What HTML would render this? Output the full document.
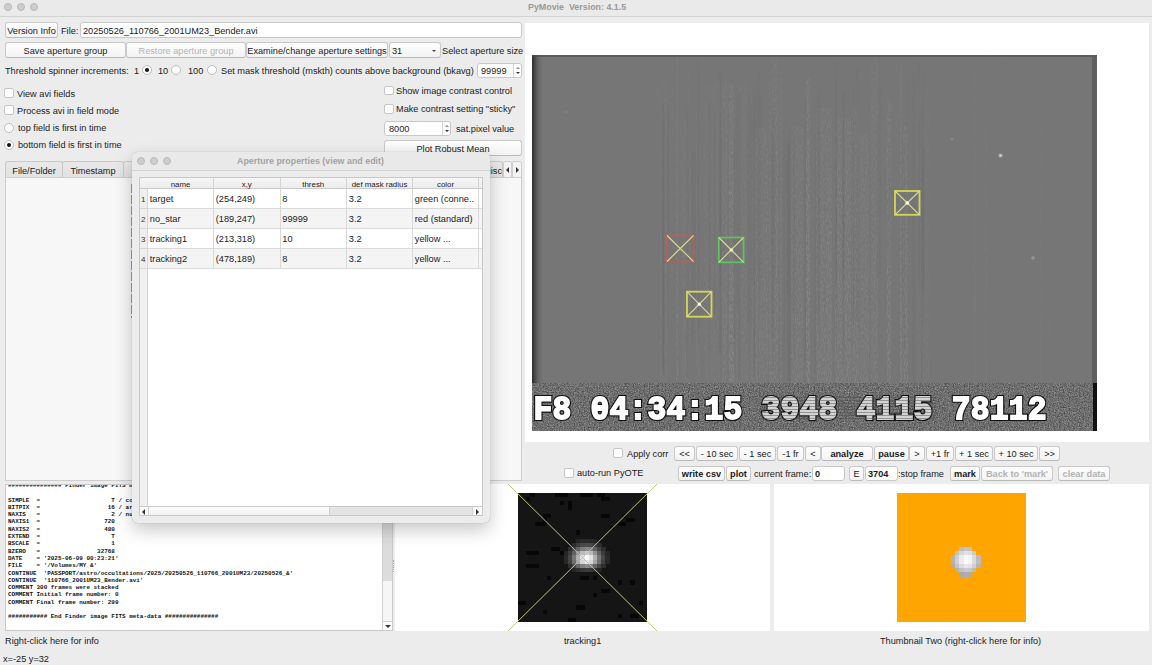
<!DOCTYPE html>
<html><head><meta charset="utf-8">
<style>
*{box-sizing:border-box;margin:0;padding:0}
html,body{width:1152px;height:665px;overflow:hidden;background:#ececec;font-family:"Liberation Sans",sans-serif;font-size:9.2px;color:#1a1a1a}
.a{position:absolute}
.t{position:absolute;white-space:nowrap;line-height:10px;margin-top:0.5px}
.btn{position:absolute;background:linear-gradient(#fefefe,#f3f3f3);border:1px solid #c9c9c9;border-bottom-color:#b9b9b9;border-radius:3px;text-align:center;white-space:nowrap;line-height:13px;color:#1a1a1a;padding-top:1.5px}
.dis{color:#b3b3b3}
.b{font-weight:bold}
.fld{position:absolute;background:#fff;border:1px solid #c8c8c8;border-radius:3px;white-space:nowrap;line-height:13px;padding-left:2px}
.cb{position:absolute;width:9px;height:9px;background:#fff;border:1px solid #c6c6c6;border-radius:2px}
.rd{position:absolute;width:10px;height:10px;background:#fff;border:1px solid #bcbcbc;border-radius:50%}
.rd.on::after{content:"";position:absolute;left:2px;top:2px;width:4px;height:4px;border-radius:50%;background:#111}
.tl{position:absolute;width:8px;height:8px;border-radius:50%;background:#cdcdcd;border:1px solid #b9b9b9}
.tab{background:linear-gradient(#e9e9e9,#e1e1e1);border:1px solid #c9c9c9;border-bottom:none;border-radius:3px 3px 0 0;text-align:center;line-height:14px;padding-top:2px;white-space:nowrap;overflow:hidden}
.tabarr{background:#f3f3f3;border:1px solid #cfcfcf;border-radius:2px}
.tri{position:absolute;width:0;height:0}
.tri.l{left:2px;top:5px;border-top:3px solid transparent;border-bottom:3px solid transparent;border-right:3px solid #333}
.tri.r{left:3px;top:5px;border-top:3px solid transparent;border-bottom:3px solid transparent;border-left:3px solid #333}
.tri.u{border-left:2.5px solid transparent;border-right:2.5px solid transparent;border-bottom:2.5px solid #888}
.tri.dd{border-left:2.5px solid transparent;border-right:2.5px solid transparent;border-top:2.5px solid #333}
.tri.d{border-left:3px solid transparent;border-right:3px solid transparent;border-top:3px solid #333}
.fits{font-family:"Liberation Mono",monospace;font-weight:bold;font-size:5.95px;line-height:7.29px;color:#111}
.ts{font-family:"Liberation Mono",monospace;font-weight:bold;font-size:31.3px;line-height:32px;color:#fff;white-space:pre;transform-origin:0 0;transform:scaleY(1.05);-webkit-text-stroke:1.7px #fff;letter-spacing:0.23px}
.tsb{color:#000;-webkit-text-stroke:4px #111}
.ts .dim{-webkit-text-stroke-color:#d2d2d2}
.ts .dim{color:#d4d4d4}
</style></head><body>

<!-- title bar -->
<div class="a" style="left:0;top:0;width:1152px;height:17px;background:#eaeaea;border-bottom:1px solid #d2d2d2"></div>
<div class="tl" style="left:4px;top:3px"></div>
<div class="tl" style="left:17px;top:3px"></div>
<div class="tl" style="left:30px;top:3px"></div>
<div class="t b" style="left:528px;top:1px;color:#999;font-size:8.9px">PyMovie&nbsp; Version: 4.1.5</div>

<!-- LEFT PANEL -->
<div class="btn" style="left:5px;top:22px;width:53px;height:16px">Version Info</div>
<div class="t" style="left:61px;top:25px">File:</div>
<div class="fld" style="left:80px;top:22px;width:442px;height:16px;padding-top:1.5px">20250526_110766_2001UM23_Bender.avi</div>

<div class="btn" style="left:5px;top:42px;width:121px;height:16px">Save aperture group</div>
<div class="btn dis" style="left:126px;top:42px;width:120px;height:16px">Restore aperture group</div>
<div class="btn" style="left:246px;top:42px;width:142px;height:16px">Examine/change aperture settings</div>
<div class="btn" style="left:389px;top:42px;width:52px;height:16px;text-align:left;padding-left:2px">31<span class="a" style="right:4.5px;top:7px;width:0;height:0;border-left:2.5px solid transparent;border-right:2.5px solid transparent;border-top:2.5px solid #444"></span></div>
<div class="t" style="left:442px;top:45px">Select aperture size</div>

<div class="t" style="left:5px;top:65px">Threshold spinner increments:</div>
<div class="t" style="left:134px;top:65px">1</div>
<div class="rd on" style="left:142px;top:65px"></div>
<div class="t" style="left:158px;top:65px">10</div>
<div class="rd" style="left:171px;top:65px"></div>
<div class="t" style="left:188px;top:65px">100</div>
<div class="rd" style="left:207px;top:65px"></div>
<div class="t" style="left:221px;top:65px">Set mask threshold (mskth) counts above background (bkavg)</div>
<div class="fld" style="left:477px;top:63px;width:45px;height:15px;padding-left:3px;padding-top:1px">99999<div class="a" style="left:35px;top:0;width:9px;height:13px;border-left:1px solid #d4d4d4"><span class="tri u" style="left:2px;top:2.5px"></span><span class="tri dd" style="left:2px;top:7.5px"></span></div></div>

<div class="cb" style="left:4px;top:88px;width:10px;height:10px"></div>
<div class="t" style="left:17px;top:88px">View avi fields</div>
<div class="cb" style="left:4px;top:105px;width:10px;height:10px"></div>
<div class="t" style="left:17px;top:105px">Process avi in field mode</div>
<div class="rd" style="left:4px;top:122.5px"></div>
<div class="t" style="left:18px;top:122px">top field is first in time</div>
<div class="rd on" style="left:4px;top:139.5px"></div>
<div class="t" style="left:18px;top:139px">bottom field is first in time</div>

<div class="cb" style="left:384px;top:85.5px;width:9.5px;height:9.5px"></div>
<div class="t" style="left:396px;top:85px">Show image contrast control</div>
<div class="cb" style="left:384px;top:104px;width:9.5px;height:9.5px"></div>
<div class="t" style="left:396px;top:103px">Make contrast setting "sticky"</div>
<div class="fld" style="left:384px;top:121px;width:67px;height:15px;padding-left:4px;padding-top:1px">8000<div class="a" style="left:57px;top:0;width:9px;height:13px;border-left:1px solid #d4d4d4"><span class="tri u" style="left:2px;top:2.5px"></span><span class="tri dd" style="left:2px;top:7.5px"></span></div></div>
<div class="t" style="left:456px;top:123px">sat.pixel value</div>
<div class="btn" style="left:384px;top:140px;width:138px;height:16px">Plot Robust Mean</div>

<!-- tabs -->
<div class="a" style="left:5px;top:177px;width:517px;height:304px;background:#f7f7f7;border:1px solid #cdcdcd"></div>
<div class="a tab" style="left:5px;top:161px;width:58px;height:16px">File/Folder</div>
<div class="a tab" style="left:62px;top:161px;width:62px;height:16px">Timestamp</div>
<div class="a tab" style="left:123px;top:161px;width:380px;height:16px;text-align:right;padding-right:0px">Misc</div>
<div class="a tabarr" style="left:503px;top:161px;width:9px;height:17px"><span class="tri l"></span></div>
<div class="a tabarr" style="left:512px;top:161px;width:10px;height:17px"><span class="tri r"></span></div>

<div class="a" style="left:130.5px;top:184px;width:1px;height:134px;background:repeating-linear-gradient(#9c9c9c 0 9px,transparent 9px 11px)"></div>
<!-- FITS text area -->
<div class="a" style="left:5px;top:484px;width:388px;height:147px;background:#fff;border:1px solid #c9c9c9;overflow:hidden">
<pre class="fits" style="position:absolute;left:2px;top:-3px">############### Finder image FITS meta-data ###############

SIMPLE  =                    T / conforms to FITS standard
BITPIX  =                   16 / array data type
NAXIS   =                    2 / number of array dimensions
NAXIS1  =                  720
NAXIS2  =                  480
EXTEND  =                    T
BSCALE  =                    1
BZERO   =                32768
DATE    = '2025-06-09 00:23:21'
FILE    = '/Volumes/MY &'
CONTINUE  'PASSPORT/astro/occultations/2025/20250526_110766_2001UM23/20250526_&'
CONTINUE  '110766_2001UM23_Bender.avi'
COMMENT 300 frames were stacked
COMMENT Initial frame number: 0
COMMENT Final frame number: 299

########### End Finder image FITS meta-data ###############</pre>
<div class="a" style="left:376px;top:-1px;width:11px;height:147px;background:#f6f6f6;border-left:1px solid #d0d0d0"></div>
<div class="a" style="left:377px;top:0;width:10px;height:96px;background:#dcdcdc"></div>
<div class="a" style="left:377px;top:136px;width:10px;height:10px;background:#fbfbfb;border-top:1px solid #d0d0d0"><span class="tri d" style="left:2px;top:3px"></span></div>
</div>
<div class="t" style="left:5px;top:635px">Right-click here for info</div>
<div class="t" style="left:3px;top:653px">x=-25 y=32</div>

<!-- RIGHT PANEL -->
<div class="a" style="left:525px;top:23px;width:624px;height:419px;background:#fff"></div>
<div class="a" id="vid" style="left:532px;top:55px;width:565px;height:376px;background:#727272;overflow:hidden"><svg class="a" style="left:0;top:0" width="565" height="377">
<defs>
<filter id="nz" x="0" y="0" width="100%" height="100%" color-interpolation-filters="sRGB"><feTurbulence type="fractalNoise" baseFrequency="0.8" numOctaves="2" seed="3"/><feColorMatrix type="matrix" values="0.5 0 0 0 0.18  0.5 0 0 0 0.18  0.5 0 0 0 0.18  0 0 0 0 1"/></filter>
<filter id="sp" x="0" y="0" width="100%" height="100%" color-interpolation-filters="sRGB"><feTurbulence type="fractalNoise" baseFrequency="0.9 0.3" numOctaves="1" seed="9"/><feColorMatrix type="matrix" values="0 0 0 0 0.56  0 0 0 0 0.56  0 0 0 0 0.56  2.4 0 0 0 -0.9"/></filter>
<linearGradient id="lg" x1="0" x2="1"><stop offset="0" stop-color="#2c2c2c"/><stop offset="0.35" stop-color="#555"/><stop offset="1" stop-color="#767676" stop-opacity="0"/></linearGradient>
<linearGradient id="vg" x1="0" y1="0" x2="0" y2="1"><stop offset="0" stop-color="#fff" stop-opacity="0.45"/><stop offset="0.5" stop-color="#fff" stop-opacity="0.85"/><stop offset="1" stop-color="#fff" stop-opacity="1"/></linearGradient>
<mask id="m1"><g><rect x="128" y="25" width="7" height="304" fill="#fff" opacity="0.35"/><rect x="144" y="2" width="2" height="327" fill="#fff" opacity="0.51"/><rect x="150" y="64" width="4" height="265" fill="#fff" opacity="0.35"/><rect x="155" y="12" width="3" height="317" fill="#fff" opacity="0.31"/><rect x="164" y="42" width="4" height="287" fill="#fff" opacity="0.27"/><rect x="172" y="30" width="16" height="299" fill="#fff" opacity="0.26"/><rect x="190" y="29" width="5" height="300" fill="#fff" opacity="0.55"/><rect x="197" y="29" width="5" height="300" fill="#fff" opacity="0.91"/><rect x="204" y="28" width="12" height="301" fill="#fff" opacity="0.35"/><rect x="219" y="83" width="7" height="246" fill="#fff" opacity="0.54"/><rect x="227" y="73" width="9" height="256" fill="#fff" opacity="0.52"/><rect x="237" y="2" width="9" height="327" fill="#fff" opacity="0.63"/><rect x="248" y="16" width="2" height="313" fill="#fff" opacity="0.55"/><rect x="259" y="71" width="12" height="258" fill="#fff" opacity="0.56"/><rect x="274" y="23" width="4" height="306" fill="#fff" opacity="0.92"/><rect x="284" y="53" width="16" height="276" fill="#fff" opacity="0.65"/><rect x="303" y="63" width="16" height="266" fill="#fff" opacity="0.70"/><rect x="320" y="49" width="7" height="280" fill="#fff" opacity="0.60"/><rect x="328" y="79" width="9" height="250" fill="#fff" opacity="0.54"/><rect x="339" y="2" width="7" height="327" fill="#fff" opacity="0.53"/><rect x="355" y="45" width="4" height="284" fill="#fff" opacity="0.76"/><rect x="368" y="12" width="2" height="317" fill="#fff" opacity="0.94"/><rect x="371" y="71" width="5" height="258" fill="#fff" opacity="0.70"/><rect x="385" y="33" width="12" height="296" fill="#fff" opacity="0.23"/><rect x="472" y="0" width="2" height="329" fill="#fff" opacity="0.12"/><rect x="508" y="0" width="2" height="329" fill="#fff" opacity="0.19"/><rect x="517" y="0" width="2" height="329" fill="#fff" opacity="0.13"/><rect x="453" y="0" width="2" height="329" fill="#fff" opacity="0.23"/><rect x="441" y="0" width="3" height="329" fill="#fff" opacity="0.24"/></g></mask>
<mask id="m2"><rect x="0" y="0" width="565" height="329" fill="url(#vg)"/></mask>
</defs>
<rect x="0" y="0" width="565" height="377" fill="#767676"/>
<g mask="url(#m2)"><g mask="url(#m1)"><rect x="0" y="0" width="565" height="329" filter="url(#sp)"/></g>
<g><rect x="292.5" y="98" width="1" height="172" fill="#666" opacity="0.23"/><rect x="321.1" y="27" width="1" height="244" fill="#666" opacity="0.33"/><rect x="159.5" y="96" width="2" height="192" fill="#666" opacity="0.23"/><rect x="218.7" y="49" width="1" height="227" fill="#666" opacity="0.25"/><rect x="261.7" y="79" width="1" height="226" fill="#666" opacity="0.28"/><rect x="304.0" y="36" width="1" height="260" fill="#666" opacity="0.18"/><rect x="257.2" y="72" width="2" height="253" fill="#666" opacity="0.20"/><rect x="176.8" y="47" width="1" height="257" fill="#666" opacity="0.19"/><rect x="201.7" y="82" width="1" height="209" fill="#666" opacity="0.30"/><rect x="221.1" y="35" width="2" height="288" fill="#666" opacity="0.21"/><rect x="371.7" y="87" width="1" height="208" fill="#666" opacity="0.34"/><rect x="380.6" y="14" width="2" height="313" fill="#666" opacity="0.17"/><rect x="224.9" y="28" width="1" height="200" fill="#666" opacity="0.27"/><rect x="239.2" y="78" width="2" height="205" fill="#666" opacity="0.27"/><rect x="240.2" y="55" width="2" height="259" fill="#666" opacity="0.18"/><rect x="391.0" y="16" width="1" height="252" fill="#666" opacity="0.27"/><rect x="187.4" y="18" width="2" height="280" fill="#666" opacity="0.35"/><rect x="386.7" y="5" width="1" height="229" fill="#666" opacity="0.19"/><rect x="177.6" y="55" width="1" height="210" fill="#666" opacity="0.20"/><rect x="303.6" y="59" width="1" height="187" fill="#666" opacity="0.33"/><rect x="130.2" y="95" width="1" height="218" fill="#666" opacity="0.32"/><rect x="310.5" y="37" width="2" height="187" fill="#666" opacity="0.26"/><rect x="154.8" y="51" width="2" height="272" fill="#666" opacity="0.19"/><rect x="222.1" y="42" width="1" height="267" fill="#666" opacity="0.27"/><rect x="226.8" y="16" width="1" height="246" fill="#666" opacity="0.23"/><rect x="182.2" y="61" width="1" height="197" fill="#666" opacity="0.33"/><rect x="130.2" y="33" width="1" height="287" fill="#666" opacity="0.24"/><rect x="215.3" y="38" width="2" height="229" fill="#666" opacity="0.17"/><rect x="206.4" y="38" width="2" height="287" fill="#666" opacity="0.33"/><rect x="286.1" y="74" width="1" height="179" fill="#666" opacity="0.18"/><rect x="135.2" y="49" width="1" height="202" fill="#666" opacity="0.23"/><rect x="161.9" y="96" width="2" height="151" fill="#666" opacity="0.13"/><rect x="165.7" y="1" width="1" height="277" fill="#666" opacity="0.18"/><rect x="375.0" y="25" width="1" height="225" fill="#666" opacity="0.16"/><rect x="389.1" y="49" width="1" height="279" fill="#666" opacity="0.24"/><rect x="356.2" y="90" width="2" height="132" fill="#666" opacity="0.15"/><rect x="204.0" y="34" width="2" height="219" fill="#666" opacity="0.24"/><rect x="251.7" y="68" width="1" height="240" fill="#666" opacity="0.15"/><rect x="130.7" y="46" width="2" height="274" fill="#666" opacity="0.32"/><rect x="272.9" y="43" width="1" height="265" fill="#666" opacity="0.26"/><rect x="310.5" y="65" width="2" height="249" fill="#666" opacity="0.31"/><rect x="254.6" y="85" width="2" height="156" fill="#666" opacity="0.19"/><rect x="347.5" y="30" width="1" height="190" fill="#666" opacity="0.30"/><rect x="282.5" y="78" width="2" height="241" fill="#666" opacity="0.15"/><rect x="255.3" y="89" width="2" height="237" fill="#666" opacity="0.24"/><rect x="241.5" y="81" width="2" height="146" fill="#666" opacity="0.17"/><rect x="344.7" y="66" width="1" height="156" fill="#666" opacity="0.29"/><rect x="386.4" y="70" width="1" height="155" fill="#666" opacity="0.31"/><rect x="187.4" y="82" width="2" height="150" fill="#666" opacity="0.33"/><rect x="390.4" y="92" width="2" height="145" fill="#666" opacity="0.26"/><rect x="238.5" y="7" width="1" height="237" fill="#666" opacity="0.25"/><rect x="303.0" y="7" width="2" height="219" fill="#666" opacity="0.25"/><rect x="324.5" y="13" width="2" height="254" fill="#666" opacity="0.19"/><rect x="287.3" y="35" width="1" height="256" fill="#666" opacity="0.33"/><rect x="166.2" y="15" width="1" height="274" fill="#666" opacity="0.24"/><rect x="368.5" y="55" width="2" height="189" fill="#666" opacity="0.13"/><rect x="191.7" y="52" width="1" height="183" fill="#666" opacity="0.17"/><rect x="227.3" y="39" width="2" height="195" fill="#666" opacity="0.12"/><rect x="219.5" y="67" width="2" height="163" fill="#666" opacity="0.15"/><rect x="285.6" y="39" width="1" height="231" fill="#666" opacity="0.34"/></g></g>
<rect x="0" y="0" width="12" height="329" fill="url(#lg)"/>
<rect x="0" y="0" width="565" height="2" fill="#4a4a4a" opacity="0.6"/>
<rect x="560" y="0" width="5" height="329" fill="#5e5e5e"/>
<rect x="0" y="328" width="565" height="48" filter="url(#nz)"/>
<rect x="561" y="328" width="4" height="48" fill="#111"/>
<circle cx="468.5" cy="100.5" r="2.2" fill="#b8b8b8" opacity="0.6"/><circle cx="468.5" cy="100.5" r="1.1" fill="#ddd"/>
<circle cx="501" cy="203" r="1.8" fill="#aaa" opacity="0.6"/>
<circle cx="420" cy="84" r="1.6" fill="#999" opacity="0.5"/>
<circle cx="34" cy="57" r="1.5" fill="#8a8a8a" opacity="0.5"/>
</svg><svg class="a" style="left:0;top:0" width="565" height="377">
<g fill="none">
<rect x="135" y="180.5" width="26.5" height="26" stroke="#c25b57" stroke-width="1.7"/>
<rect x="186.8" y="182.5" width="24.8" height="24.8" stroke="#5fc45f" stroke-width="1.7"/>
<rect x="155" y="236.7" width="24.5" height="25" stroke="#d6d655" stroke-width="1.8"/>
<rect x="363" y="136" width="24.5" height="23.8" stroke="#d6d655" stroke-width="1.8"/>
<g stroke="#dcdc8c" stroke-width="1.1">
<path d="M135 180.5L161.5 206.5M161.5 180.5L135 206.5"/>
<path d="M186.8 182.5L211.6 207.3M211.6 182.5L186.8 207.3"/>
<path d="M155 236.7L179.5 261.7M179.5 236.7L155 261.7"/>
<path d="M363 136L387.5 159.8M387.5 136L363 159.8"/>
</g></g>
<circle cx="199.2" cy="194.9" r="1.6" fill="#f4f4c8"/>
<circle cx="167.2" cy="249.2" r="1.6" fill="#fff"/>
<circle cx="375.2" cy="148" r="1.8" fill="#fff"/>
</svg>
<div class="a ts tsb" style="left:1.4px;top:338.5px">F8 04:34:15 3948 4115 78112</div><div class="a ts" style="left:1.4px;top:338.5px">F8 04:34:15 <span class="dim">3948 4115</span> 78112</div><div class="a" style="left:228px;top:340px;width:176px;height:25px;background:repeating-linear-gradient(transparent 0 2px,rgba(70,70,70,0.45) 2px 3px)"></div></div>

<!-- control row 1 -->
<div class="cb" style="left:613px;top:448px;width:10px;height:10px"></div>
<div class="t" style="left:627px;top:448px">Apply corr</div>
<div class="btn" style="left:674px;top:446px;width:21px;height:15px;padding-top:0.5px">&lt;&lt;</div>
<div class="btn" style="left:696px;top:446px;width:42px;height:15px;padding-top:0.5px">- 10 sec</div>
<div class="btn" style="left:739px;top:446px;width:37px;height:15px;padding-top:0.5px">- 1 sec</div>
<div class="btn" style="left:777px;top:446px;width:27px;height:15px;padding-top:0.5px">-1 fr</div>
<div class="btn" style="left:805px;top:446px;width:16px;height:15px;padding-top:0.5px">&lt;</div>
<div class="btn b" style="left:821px;top:446px;width:52px;height:15px;padding-top:0.5px">analyze</div>
<div class="btn b" style="left:874px;top:446px;width:35px;height:15px;padding-top:0.5px">pause</div>
<div class="btn" style="left:909px;top:446px;width:16px;height:15px;padding-top:0.5px">&gt;</div>
<div class="btn" style="left:926px;top:446px;width:28px;height:15px;padding-top:0.5px">+1 fr</div>
<div class="btn" style="left:955px;top:446px;width:38px;height:15px;padding-top:0.5px">+ 1 sec</div>
<div class="btn" style="left:994px;top:446px;width:44px;height:15px;padding-top:0.5px">+ 10 sec</div>
<div class="btn" style="left:1039px;top:446px;width:21px;height:15px;padding-top:0.5px">&gt;&gt;</div>

<!-- control row 2 -->
<div class="cb" style="left:564px;top:468px;width:10px;height:10px"></div>
<div class="t" style="left:577px;top:467px">auto-run PyOTE</div>
<div class="btn b" style="left:678px;top:466px;width:47px;height:15px;padding-top:0.5px">write csv</div>
<div class="btn b" style="left:726px;top:466px;width:25px;height:15px;padding-top:0.5px">plot</div>
<div class="t" style="left:754px;top:468px">current frame:</div>
<div class="fld b" style="left:812px;top:466px;width:33px;height:15px;padding-top:0.5px">0</div>
<div class="btn" style="left:849px;top:466px;width:15px;height:15px;padding-top:0.5px">E</div>
<div class="fld b" style="left:865px;top:466px;width:33px;height:15px;padding-top:0.5px">3704</div>
<div class="t" style="left:898px;top:468px">:stop frame</div>
<div class="btn b" style="left:950px;top:466px;width:30px;height:15px;padding-top:0.5px">mark</div>
<div class="btn b dis" style="left:981px;top:466px;width:72px;height:15px;padding-top:0.5px">Back to 'mark'</div>
<div class="btn b dis" style="left:1058px;top:466px;width:52px;height:15px;padding-top:0.5px">clear data</div>

<!-- thumbnails -->
<div class="a" style="left:395px;top:484px;width:375px;height:147px;background:#fff"></div>
<div class="a" style="left:393px;top:560px;width:1px;height:12px;border-left:1px dotted #aaa"></div>
<svg class="a" style="left:518px;top:493px" width="129" height="129" shape-rendering="crispEdges"><rect x="0" y="0" width="129" height="129" fill="#151515"/><rect x="58.26" y="112.35" width="8.32" height="4.16" fill="#070707"/><rect x="112.35" y="120.68" width="8.32" height="4.16" fill="#070707"/><rect x="58.26" y="66.58" width="8.32" height="4.16" fill="#070707"/><rect x="24.97" y="20.81" width="8.32" height="4.16" fill="#070707"/><rect x="62.42" y="83.23" width="8.32" height="4.16" fill="#070707"/><rect x="104.03" y="20.81" width="4.16" height="4.16" fill="#070707"/><rect x="58.26" y="37.45" width="4.16" height="4.16" fill="#070707"/><rect x="8.32" y="70.74" width="12.48" height="4.16" fill="#070707"/><rect x="83.23" y="4.16" width="8.32" height="4.16" fill="#070707"/><rect x="49.94" y="124.84" width="8.32" height="4.16" fill="#070707"/><rect x="83.23" y="95.71" width="8.32" height="4.16" fill="#070707"/><rect x="83.23" y="20.81" width="8.32" height="4.16" fill="#070707"/><rect x="0.00" y="108.19" width="8.32" height="4.16" fill="#070707"/><rect x="8.32" y="4.16" width="4.16" height="4.16" fill="#070707"/><rect x="24.97" y="116.52" width="4.16" height="4.16" fill="#070707"/><rect x="79.06" y="0.00" width="8.32" height="4.16" fill="#070707"/><rect x="41.61" y="58.26" width="8.32" height="4.16" fill="#070707"/><rect x="108.19" y="24.97" width="8.32" height="4.16" fill="#070707"/><rect x="29.13" y="83.23" width="4.16" height="4.16" fill="#070707"/><rect x="62.42" y="0.00" width="12.48" height="4.16" fill="#070707"/><rect x="8.32" y="58.26" width="12.48" height="4.16" fill="#070707"/><rect x="33.29" y="54.10" width="8.32" height="4.16" fill="#070707"/><rect x="120.68" y="108.19" width="4.16" height="4.16" fill="#070707"/><rect x="91.55" y="33.29" width="4.16" height="4.16" fill="#070707"/><rect x="99.87" y="29.13" width="8.32" height="4.16" fill="#070707"/><rect x="37.45" y="0.00" width="4.16" height="4.16" fill="#070707"/><rect x="74.90" y="99.87" width="4.16" height="4.16" fill="#070707"/><rect x="49.94" y="12.48" width="4.16" height="4.16" fill="#070707"/><rect x="49.94" y="8.32" width="4.16" height="4.16" fill="#070707"/><rect x="112.35" y="87.39" width="4.16" height="4.16" fill="#070707"/><rect x="24.97" y="24.97" width="4.16" height="4.16" fill="#070707"/><rect x="62.42" y="49.94" width="12.48" height="4.16" fill="#070707"/><rect x="49.94" y="54.10" width="4.16" height="4.16" fill="#070707"/><rect x="74.90" y="83.23" width="4.16" height="4.16" fill="#070707"/><rect x="99.87" y="87.39" width="4.16" height="4.16" fill="#070707"/><rect x="41.61" y="8.32" width="4.16" height="4.16" fill="#070707"/><rect x="41.61" y="0.00" width="8.32" height="4.16" fill="#070707"/><rect x="99.87" y="120.68" width="4.16" height="4.16" fill="#070707"/><rect x="16.65" y="29.13" width="12.48" height="4.16" fill="#070707"/><rect x="12.48" y="0.00" width="4.16" height="4.16" fill="#070707"/><rect x="58.26" y="45.77" width="4.46" height="4.46" fill="rgb(35,35,35)"/><rect x="62.42" y="45.77" width="4.46" height="4.46" fill="rgb(40,40,40)"/><rect x="66.58" y="45.77" width="4.46" height="4.46" fill="rgb(42,42,42)"/><rect x="70.74" y="45.77" width="4.46" height="4.46" fill="rgb(40,40,40)"/><rect x="74.90" y="45.77" width="4.46" height="4.46" fill="rgb(35,35,35)"/><rect x="54.10" y="49.94" width="4.46" height="4.46" fill="rgb(44,44,44)"/><rect x="58.26" y="49.94" width="4.46" height="4.46" fill="rgb(59,59,59)"/><rect x="62.42" y="49.94" width="4.46" height="4.46" fill="rgb(71,71,71)"/><rect x="66.58" y="49.94" width="4.46" height="4.46" fill="rgb(76,76,76)"/><rect x="70.74" y="49.94" width="4.46" height="4.46" fill="rgb(71,71,71)"/><rect x="74.90" y="49.94" width="4.46" height="4.46" fill="rgb(59,59,59)"/><rect x="79.06" y="49.94" width="4.46" height="4.46" fill="rgb(44,44,44)"/><rect x="49.94" y="54.10" width="4.46" height="4.46" fill="rgb(45,45,45)"/><rect x="54.10" y="54.10" width="4.46" height="4.46" fill="rgb(69,69,69)"/><rect x="58.26" y="54.10" width="4.46" height="4.46" fill="rgb(99,99,99)"/><rect x="62.42" y="54.10" width="4.46" height="4.46" fill="rgb(125,125,125)"/><rect x="66.58" y="54.10" width="4.46" height="4.46" fill="rgb(135,135,135)"/><rect x="70.74" y="54.10" width="4.46" height="4.46" fill="rgb(125,125,125)"/><rect x="74.90" y="54.10" width="4.46" height="4.46" fill="rgb(99,99,99)"/><rect x="79.06" y="54.10" width="4.46" height="4.46" fill="rgb(69,69,69)"/><rect x="83.23" y="54.10" width="4.46" height="4.46" fill="rgb(45,45,45)"/><rect x="45.77" y="58.26" width="4.46" height="4.46" fill="rgb(37,37,37)"/><rect x="49.94" y="58.26" width="4.46" height="4.46" fill="rgb(60,60,60)"/><rect x="54.10" y="58.26" width="4.46" height="4.46" fill="rgb(98,98,98)"/><rect x="58.26" y="58.26" width="4.46" height="4.46" fill="rgb(146,146,146)"/><rect x="62.42" y="58.26" width="4.46" height="4.46" fill="rgb(187,187,187)"/><rect x="66.58" y="58.26" width="4.46" height="4.46" fill="rgb(204,204,204)"/><rect x="70.74" y="58.26" width="4.46" height="4.46" fill="rgb(187,187,187)"/><rect x="74.90" y="58.26" width="4.46" height="4.46" fill="rgb(146,146,146)"/><rect x="79.06" y="58.26" width="4.46" height="4.46" fill="rgb(98,98,98)"/><rect x="83.23" y="58.26" width="4.46" height="4.46" fill="rgb(60,60,60)"/><rect x="87.39" y="58.26" width="4.46" height="4.46" fill="rgb(37,37,37)"/><rect x="45.77" y="62.42" width="4.46" height="4.46" fill="rgb(41,41,41)"/><rect x="49.94" y="62.42" width="4.46" height="4.46" fill="rgb(70,70,70)"/><rect x="54.10" y="62.42" width="4.46" height="4.46" fill="rgb(117,117,117)"/><rect x="58.26" y="62.42" width="4.46" height="4.46" fill="rgb(177,177,177)"/><rect x="62.42" y="62.42" width="4.46" height="4.46" fill="rgb(229,229,229)"/><rect x="66.58" y="62.42" width="4.46" height="4.46" fill="rgb(250,250,250)"/><rect x="70.74" y="62.42" width="4.46" height="4.46" fill="rgb(229,229,229)"/><rect x="74.90" y="62.42" width="4.46" height="4.46" fill="rgb(177,177,177)"/><rect x="79.06" y="62.42" width="4.46" height="4.46" fill="rgb(117,117,117)"/><rect x="83.23" y="62.42" width="4.46" height="4.46" fill="rgb(70,70,70)"/><rect x="87.39" y="62.42" width="4.46" height="4.46" fill="rgb(41,41,41)"/><rect x="45.77" y="66.58" width="4.46" height="4.46" fill="rgb(40,40,40)"/><rect x="49.94" y="66.58" width="4.46" height="4.46" fill="rgb(66,66,66)"/><rect x="54.10" y="66.58" width="4.46" height="4.46" fill="rgb(110,110,110)"/><rect x="58.26" y="66.58" width="4.46" height="4.46" fill="rgb(165,165,165)"/><rect x="62.42" y="66.58" width="4.46" height="4.46" fill="rgb(214,214,214)"/><rect x="66.58" y="66.58" width="4.46" height="4.46" fill="rgb(233,233,233)"/><rect x="70.74" y="66.58" width="4.46" height="4.46" fill="rgb(214,214,214)"/><rect x="74.90" y="66.58" width="4.46" height="4.46" fill="rgb(165,165,165)"/><rect x="79.06" y="66.58" width="4.46" height="4.46" fill="rgb(110,110,110)"/><rect x="83.23" y="66.58" width="4.46" height="4.46" fill="rgb(66,66,66)"/><rect x="87.39" y="66.58" width="4.46" height="4.46" fill="rgb(40,40,40)"/><rect x="49.94" y="70.74" width="4.46" height="4.46" fill="rgb(46,46,46)"/><rect x="54.10" y="70.74" width="4.46" height="4.46" fill="rgb(70,70,70)"/><rect x="58.26" y="70.74" width="4.46" height="4.46" fill="rgb(101,101,101)"/><rect x="62.42" y="70.74" width="4.46" height="4.46" fill="rgb(128,128,128)"/><rect x="66.58" y="70.74" width="4.46" height="4.46" fill="rgb(139,139,139)"/><rect x="70.74" y="70.74" width="4.46" height="4.46" fill="rgb(128,128,128)"/><rect x="74.90" y="70.74" width="4.46" height="4.46" fill="rgb(101,101,101)"/><rect x="79.06" y="70.74" width="4.46" height="4.46" fill="rgb(70,70,70)"/><rect x="83.23" y="70.74" width="4.46" height="4.46" fill="rgb(46,46,46)"/><rect x="54.10" y="74.90" width="4.46" height="4.46" fill="rgb(37,37,37)"/><rect x="58.26" y="74.90" width="4.46" height="4.46" fill="rgb(47,47,47)"/><rect x="62.42" y="74.90" width="4.46" height="4.46" fill="rgb(56,56,56)"/><rect x="66.58" y="74.90" width="4.46" height="4.46" fill="rgb(59,59,59)"/><rect x="70.74" y="74.90" width="4.46" height="4.46" fill="rgb(56,56,56)"/><rect x="74.90" y="74.90" width="4.46" height="4.46" fill="rgb(47,47,47)"/><rect x="79.06" y="74.90" width="4.46" height="4.46" fill="rgb(37,37,37)"/></svg>
<svg class="a" style="left:395px;top:484px" width="375" height="147"><line x1="113" y1="0" x2="262" y2="147" stroke="#c4c47e" stroke-width="1"/><line x1="262" y1="0" x2="113" y2="147" stroke="#c4c47e" stroke-width="1"/></svg>
<div class="t" style="left:564px;top:635px">tracking1</div>
<div class="a" style="left:774px;top:484px;width:375px;height:147px;background:#fff"></div>
<svg class="a" style="left:897px;top:493px" width="129" height="129" shape-rendering="crispEdges"><rect x="0" y="0" width="129" height="129" fill="#ffa500"/><rect x="62.42" y="54.10" width="4.46" height="4.46" fill="rgb(189,189,192)"/><rect x="66.58" y="54.10" width="4.46" height="4.46" fill="rgb(196,196,199)"/><rect x="70.74" y="54.10" width="4.46" height="4.46" fill="rgb(193,193,196)"/><rect x="58.26" y="58.26" width="4.46" height="4.46" fill="rgb(193,193,196)"/><rect x="62.42" y="58.26" width="4.46" height="4.46" fill="rgb(216,216,219)"/><rect x="66.58" y="58.26" width="4.46" height="4.46" fill="rgb(227,227,230)"/><rect x="70.74" y="58.26" width="4.46" height="4.46" fill="rgb(222,222,225)"/><rect x="74.90" y="58.26" width="4.46" height="4.46" fill="rgb(203,203,206)"/><rect x="54.10" y="62.42" width="4.46" height="4.46" fill="rgb(178,178,181)"/><rect x="58.26" y="62.42" width="4.46" height="4.46" fill="rgb(207,207,210)"/><rect x="62.42" y="62.42" width="4.46" height="4.46" fill="rgb(235,235,238)"/><rect x="66.58" y="62.42" width="4.46" height="4.46" fill="rgb(250,250,253)"/><rect x="70.74" y="62.42" width="4.46" height="4.46" fill="rgb(243,243,246)"/><rect x="74.90" y="62.42" width="4.46" height="4.46" fill="rgb(219,219,222)"/><rect x="79.06" y="62.42" width="4.46" height="4.46" fill="rgb(189,189,192)"/><rect x="54.10" y="66.58" width="4.46" height="4.46" fill="rgb(179,179,182)"/><rect x="58.26" y="66.58" width="4.46" height="4.46" fill="rgb(208,208,211)"/><rect x="62.42" y="66.58" width="4.46" height="4.46" fill="rgb(237,237,240)"/><rect x="66.58" y="66.58" width="4.46" height="4.46" fill="rgb(252,252,255)"/><rect x="70.74" y="66.58" width="4.46" height="4.46" fill="rgb(245,245,248)"/><rect x="74.90" y="66.58" width="4.46" height="4.46" fill="rgb(220,220,223)"/><rect x="79.06" y="66.58" width="4.46" height="4.46" fill="rgb(190,190,193)"/><rect x="54.10" y="70.74" width="4.46" height="4.46" fill="rgb(172,172,175)"/><rect x="58.26" y="70.74" width="4.46" height="4.46" fill="rgb(196,196,199)"/><rect x="62.42" y="70.74" width="4.46" height="4.46" fill="rgb(220,220,223)"/><rect x="66.58" y="70.74" width="4.46" height="4.46" fill="rgb(233,233,236)"/><rect x="70.74" y="70.74" width="4.46" height="4.46" fill="rgb(227,227,230)"/><rect x="74.90" y="70.74" width="4.46" height="4.46" fill="rgb(207,207,210)"/><rect x="79.06" y="70.74" width="4.46" height="4.46" fill="rgb(181,181,184)"/><rect x="58.26" y="74.90" width="4.46" height="4.46" fill="rgb(178,178,181)"/><rect x="62.42" y="74.90" width="4.46" height="4.46" fill="rgb(194,194,197)"/><rect x="66.58" y="74.90" width="4.46" height="4.46" fill="rgb(203,203,206)"/><rect x="70.74" y="74.90" width="4.46" height="4.46" fill="rgb(199,199,202)"/><rect x="74.90" y="74.90" width="4.46" height="4.46" fill="rgb(185,185,188)"/><rect x="62.42" y="79.06" width="4.46" height="4.46" fill="rgb(170,170,173)"/><rect x="66.58" y="79.06" width="4.46" height="4.46" fill="rgb(174,174,177)"/><rect x="70.74" y="79.06" width="4.46" height="4.46" fill="rgb(172,172,175)"/></svg>
<div class="t" style="left:880px;top:635px">Thumbnail Two (right-click here for info)</div>


<!-- DIALOG -->
<div class="a" style="left:132px;top:152px;width:358px;height:371px;border-radius:6px;box-shadow:0 0 1px rgba(0,0,0,0.35),0 7px 18px rgba(0,0,0,0.22);background:#ececec;overflow:hidden">
 <div class="a" style="left:0;top:0;width:358px;height:19px;background:#e9e9e9;border-bottom:1px solid #d3d3d3"></div>
 <div class="tl" style="left:5px;top:5px"></div>
 <div class="tl" style="left:18px;top:5px"></div>
 <div class="tl" style="left:31px;top:5px"></div>
 <div class="t b" style="left:105px;top:3px;color:#a3a3a3;font-size:8.9px">Aperture properties (view and edit)</div>
 <div class="a" style="left:7px;top:25px;width:344px;height:339px;background:#fff;border:1px solid #c8c8c8;overflow:hidden">
  <div class="a" style="left:0;top:0;width:342px;height:11px;background:linear-gradient(#f6f6f6,#ececec);border-bottom:1px solid #cacaca"></div>
  <div class="a" style="left:0;top:11px;width:8px;height:337px;background:#f0f0f0;border-right:1px solid #d6d6d6"></div>
  <div class="a" style="left:8px;top:0;width:66.0px;height:11px;border-right:1px solid #d4d4d4;text-align:center;font-size:7.9px;line-height:11px;padding-top:1px;color:#222">name</div>
  <div class="a" style="left:74px;top:0;width:66.5px;height:11px;border-right:1px solid #d4d4d4;text-align:center;font-size:7.9px;line-height:11px;padding-top:1px;color:#222">x,y</div>
  <div class="a" style="left:140.5px;top:0;width:66.5px;height:11px;border-right:1px solid #d4d4d4;text-align:center;font-size:7.9px;line-height:11px;padding-top:1px;color:#222">thresh</div>
  <div class="a" style="left:207px;top:0;width:66.0px;height:11px;border-right:1px solid #d4d4d4;text-align:center;font-size:7.9px;line-height:11px;padding-top:1px;color:#222">def mask radius</div>
  <div class="a" style="left:273px;top:0;width:66.2px;height:11px;border-right:1px solid #d4d4d4;text-align:center;font-size:7.9px;line-height:11px;padding-top:1px;color:#222">color</div>
  <div class="a" style="left:339.2px;top:0;width:3.8px;height:11px;border-right:1px solid #d4d4d4;text-align:center;font-size:7.9px;line-height:11px;padding-top:1px;color:#222"></div>
  <div class="a" style="left:8px;top:11px;width:335px;height:20px;background:#fff;border-bottom:1px solid #dadada"></div>
  <div class="a" style="left:0;top:11px;width:8px;height:20px;background:#efefef;border-bottom:1px solid #d6d6d6;border-right:1px solid #d6d6d6;font-size:8px;line-height:21px;text-align:center;padding-right:0.5px;color:#333">1</div>
  <div class="a" style="left:8px;top:11px;width:66.0px;height:20px;border-right:1px solid #d9d9d9;line-height:21px;padding-left:1.8px;white-space:nowrap;overflow:hidden">target</div>
  <div class="a" style="left:74px;top:11px;width:66.5px;height:20px;border-right:1px solid #d9d9d9;line-height:21px;padding-left:1.8px;white-space:nowrap;overflow:hidden">(254,249)</div>
  <div class="a" style="left:140.5px;top:11px;width:66.5px;height:20px;border-right:1px solid #d9d9d9;line-height:21px;padding-left:1.8px;white-space:nowrap;overflow:hidden">8</div>
  <div class="a" style="left:207px;top:11px;width:66.0px;height:20px;border-right:1px solid #d9d9d9;line-height:21px;padding-left:1.8px;white-space:nowrap;overflow:hidden">3.2</div>
  <div class="a" style="left:273px;top:11px;width:66.2px;height:20px;border-right:1px solid #d9d9d9;line-height:21px;padding-left:1.8px;white-space:nowrap;overflow:hidden">green (conne..</div>
  <div class="a" style="left:339.2px;top:11px;width:3.8px;height:20px;border-right:1px solid #d9d9d9;line-height:21px;padding-left:1.8px;white-space:nowrap;overflow:hidden"></div>
  <div class="a" style="left:8px;top:31px;width:335px;height:20px;background:#f4f4f4;border-bottom:1px solid #dadada"></div>
  <div class="a" style="left:0;top:31px;width:8px;height:20px;background:#efefef;border-bottom:1px solid #d6d6d6;border-right:1px solid #d6d6d6;font-size:8px;line-height:21px;text-align:center;padding-right:0.5px;color:#333">2</div>
  <div class="a" style="left:8px;top:31px;width:66.0px;height:20px;border-right:1px solid #d9d9d9;line-height:21px;padding-left:1.8px;white-space:nowrap;overflow:hidden">no_star</div>
  <div class="a" style="left:74px;top:31px;width:66.5px;height:20px;border-right:1px solid #d9d9d9;line-height:21px;padding-left:1.8px;white-space:nowrap;overflow:hidden">(189,247)</div>
  <div class="a" style="left:140.5px;top:31px;width:66.5px;height:20px;border-right:1px solid #d9d9d9;line-height:21px;padding-left:1.8px;white-space:nowrap;overflow:hidden">99999</div>
  <div class="a" style="left:207px;top:31px;width:66.0px;height:20px;border-right:1px solid #d9d9d9;line-height:21px;padding-left:1.8px;white-space:nowrap;overflow:hidden">3.2</div>
  <div class="a" style="left:273px;top:31px;width:66.2px;height:20px;border-right:1px solid #d9d9d9;line-height:21px;padding-left:1.8px;white-space:nowrap;overflow:hidden">red (standard)</div>
  <div class="a" style="left:339.2px;top:31px;width:3.8px;height:20px;border-right:1px solid #d9d9d9;line-height:21px;padding-left:1.8px;white-space:nowrap;overflow:hidden"></div>
  <div class="a" style="left:8px;top:51px;width:335px;height:20px;background:#fff;border-bottom:1px solid #dadada"></div>
  <div class="a" style="left:0;top:51px;width:8px;height:20px;background:#efefef;border-bottom:1px solid #d6d6d6;border-right:1px solid #d6d6d6;font-size:8px;line-height:21px;text-align:center;padding-right:0.5px;color:#333">3</div>
  <div class="a" style="left:8px;top:51px;width:66.0px;height:20px;border-right:1px solid #d9d9d9;line-height:21px;padding-left:1.8px;white-space:nowrap;overflow:hidden">tracking1</div>
  <div class="a" style="left:74px;top:51px;width:66.5px;height:20px;border-right:1px solid #d9d9d9;line-height:21px;padding-left:1.8px;white-space:nowrap;overflow:hidden">(213,318)</div>
  <div class="a" style="left:140.5px;top:51px;width:66.5px;height:20px;border-right:1px solid #d9d9d9;line-height:21px;padding-left:1.8px;white-space:nowrap;overflow:hidden">10</div>
  <div class="a" style="left:207px;top:51px;width:66.0px;height:20px;border-right:1px solid #d9d9d9;line-height:21px;padding-left:1.8px;white-space:nowrap;overflow:hidden">3.2</div>
  <div class="a" style="left:273px;top:51px;width:66.2px;height:20px;border-right:1px solid #d9d9d9;line-height:21px;padding-left:1.8px;white-space:nowrap;overflow:hidden">yellow ...</div>
  <div class="a" style="left:339.2px;top:51px;width:3.8px;height:20px;border-right:1px solid #d9d9d9;line-height:21px;padding-left:1.8px;white-space:nowrap;overflow:hidden"></div>
  <div class="a" style="left:8px;top:71px;width:335px;height:20px;background:#f4f4f4;border-bottom:1px solid #dadada"></div>
  <div class="a" style="left:0;top:71px;width:8px;height:20px;background:#efefef;border-bottom:1px solid #d6d6d6;border-right:1px solid #d6d6d6;font-size:8px;line-height:21px;text-align:center;padding-right:0.5px;color:#333">4</div>
  <div class="a" style="left:8px;top:71px;width:66.0px;height:20px;border-right:1px solid #d9d9d9;line-height:21px;padding-left:1.8px;white-space:nowrap;overflow:hidden">tracking2</div>
  <div class="a" style="left:74px;top:71px;width:66.5px;height:20px;border-right:1px solid #d9d9d9;line-height:21px;padding-left:1.8px;white-space:nowrap;overflow:hidden">(478,189)</div>
  <div class="a" style="left:140.5px;top:71px;width:66.5px;height:20px;border-right:1px solid #d9d9d9;line-height:21px;padding-left:1.8px;white-space:nowrap;overflow:hidden">8</div>
  <div class="a" style="left:207px;top:71px;width:66.0px;height:20px;border-right:1px solid #d9d9d9;line-height:21px;padding-left:1.8px;white-space:nowrap;overflow:hidden">3.2</div>
  <div class="a" style="left:273px;top:71px;width:66.2px;height:20px;border-right:1px solid #d9d9d9;line-height:21px;padding-left:1.8px;white-space:nowrap;overflow:hidden">yellow ...</div>
  <div class="a" style="left:339.2px;top:71px;width:3.8px;height:20px;border-right:1px solid #d9d9d9;line-height:21px;padding-left:1.8px;white-space:nowrap;overflow:hidden"></div>
  <div class="a" style="left:0;top:328px;width:342px;height:10px;background:#e4e4e4;border-top:1px solid #cacaca"></div>
  <div class="a" style="left:9px;top:329px;width:181px;height:9px;background:linear-gradient(#fbfbfb,#f1f1f1);border-right:1px solid #d0d0d0"></div>
  <div class="a" style="left:0;top:329px;width:9px;height:9px;background:#fafafa;border-right:1px solid #d0d0d0"><span class="tri l" style="left:2px;top:1.5px"></span></div>
  <div class="a" style="left:332px;top:329px;width:10px;height:9px;background:#fafafa;border-left:1px solid #d0d0d0"><span class="tri r" style="left:3px;top:1.5px"></span></div>
 </div>
</div>
</body></html>
